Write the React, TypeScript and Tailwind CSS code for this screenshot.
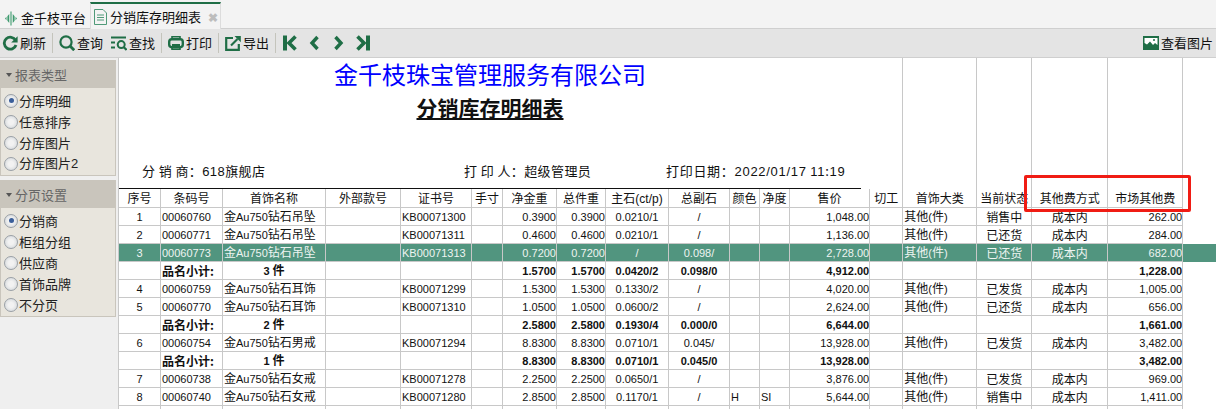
import React from "react";

const GREEN = "#1f6e46";

function Mix({ t, latin = "text-[11px]" }: { t: string; latin?: string }) {
  const parts = t.split(/([A-Za-z0-9.,/()]+)/);
  return (
    <>
      {parts.map((p, i) =>
        /^[A-Za-z0-9.,/()]+$/.test(p) ? (
          <span key={i} className={`${latin} font-['Liberation_Sans',sans-serif]`}>{p}</span>
        ) : (
          <span key={i}>{p}</span>
        )
      )}
    </>
  );
}

const Ic = ({ w = 16, children }: { w?: number; children: React.ReactNode }) => (
  <svg width={w} height={16} viewBox={`0 0 ${w} 16`} fill="none" stroke={GREEN} strokeWidth={2} className="shrink-0">
    {children}
  </svg>
);

function ToolBtn({ icon, label }: { icon: React.ReactNode; label: string }) {
  return (
    <div className="flex items-center gap-[2px] text-[13px] leading-none text-[#111]">
      {icon}
      <span className="-mt-[1px]">{label}</span>
    </div>
  );
}

const Sep = () => <div className="w-px h-[20px] bg-[#c4c4bc] mx-[6px]" />;

function Radio({ label, on }: { label: string; on?: boolean }) {
  return (
    <div className="flex items-center h-[21px] pl-[3px] gap-[1px] text-[13px] text-[#222]">
      <span className="w-[14px] h-[14px] rounded-full border border-[#9aa0a6] bg-[radial-gradient(circle,#f2f2f2_30%,#cdd2d6_100%)] flex items-center justify-center">
        {on && <span className="w-[5px] h-[5px] rounded-full bg-[#3b5f9a]" />}
      </span>
      <span><Mix t={label} latin="text-[13px]" /></span>
    </div>
  );
}

function Group({ title, items, on }: { title: string; items: string[]; on: number }) {
  return (
    <div className="w-[116px] border border-[#c9c5bc] bg-[#e8e5dd]">
      <div className="h-[27px] bg-[#c9c5bc] flex items-center pl-[5px] gap-[2px] text-[13px] text-[#666]">
        <span className="w-0 h-0 border-x-[3.5px] border-x-transparent border-t-[4px] border-t-[#555]" />
        <span className="ml-[1px]">{title}</span>
      </div>
      <div className="pt-[2px] pb-[1px]">
        {items.map((x, i) => (
          <Radio key={x} label={x} on={i === on} />
        ))}
      </div>
    </div>
  );
}

const widths = [42, 62, 103, 75, 71, 31, 54, 49, 63, 61, 30, 30, 80, 33, 74, 55, 76, 75];
const heads = ["序号", "条码号", "首饰名称", "外部款号", "证书号", "手寸", "净金重", "总件重", "主石(ct/p)", "总副石", "颜色", "净度", "售价", "切工", "首饰大类", "当前状态", "其他费方式", "市场其他费"];
const aligns = ["c", "l", "l", "l", "l", "l", "r", "r", "c", "c", "l", "l", "r", "c", "l", "c", "c", "r"];

type R = { d: string[]; sel?: boolean; sum?: boolean };
const row = (n: string, code: string, name: string, cert: string, a: string, b: string, c: string, e: string, g: string, h: string, price: string, st: string, fee: string): R => ({
  d: [n, code, name, "", cert, "", a, b, c, e, g, h, price, "", "其他(件)", st, "成本内", fee],
});
const sum = (cnt: string, a: string, b: string, c: string, e: string, price: string, fee: string): R => ({
  sum: true,
  d: ["", "品名小计:", cnt, "", "", "", a, b, c, e, "", "", price, "", "", "", "", fee],
});
const rows: R[] = [
  row("1", "00060760", "金Au750钻石吊坠", "KB00071300", "0.3900", "0.3900", "0.0210/1", "/", "", "", "1,048.00", "销售中", "262.00"),
  row("2", "00060771", "金Au750钻石吊坠", "KB00071311", "0.4600", "0.4600", "0.0210/1", "/", "", "", "1,136.00", "已还货", "284.00"),
  { ...row("3", "00060773", "金Au750钻石吊坠", "KB00071313", "0.7200", "0.7200", "/", "0.098/", "", "", "2,728.00", "已还货", "682.00"), sel: true },
  sum("3 件", "1.5700", "1.5700", "0.0420/2", "0.098/0", "4,912.00", "1,228.00"),
  row("4", "00060759", "金Au750钻石耳饰", "KB00071299", "1.5300", "1.5300", "0.1330/2", "/", "", "", "4,020.00", "已发货", "1,005.00"),
  row("5", "00060770", "金Au750钻石耳饰", "KB00071310", "1.0500", "1.0500", "0.0600/2", "/", "", "", "2,624.00", "已还货", "656.00"),
  sum("2 件", "2.5800", "2.5800", "0.1930/4", "0.000/0", "6,644.00", "1,661.00"),
  row("6", "00060754", "金Au750钻石男戒", "KB00071294", "8.8300", "8.8300", "0.0710/1", "0.045/", "", "", "13,928.00", "已发货", "3,482.00"),
  sum("1 件", "8.8300", "8.8300", "0.0710/1", "0.045/0", "13,928.00", "3,482.00"),
  row("7", "00060738", "金Au750钻石女戒", "KB00071278", "2.2500", "2.2500", "0.0650/1", "/", "", "", "3,876.00", "已发货", "969.00"),
  row("8", "00060740", "金Au750钻石女戒", "KB00071280", "2.8500", "2.8500", "0.1170/1", "/", "H", "SI", "5,644.00", "销售中", "1,411.00"),
];

const line = "border-r border-b border-[#c8c8c8]";

export default function App() {
  return (
    <div className="w-[1216px] h-[409px] overflow-hidden bg-[#efefef] flex flex-col font-['Noto_Sans_CJK_SC','Liberation_Sans',sans-serif] text-[#111]">
      {/* Tabs */}
      <div className="h-[29px] shrink-0 bg-[#f3f3f3] border-b border-[#cfcfcf] flex items-end">
        <div className="flex items-center h-[26px] w-[90px] pl-[5px] gap-[3px] text-[13px] pt-[6px]">
          <svg width="12" height="15" viewBox="0 0 13 15" className="shrink-0">
            <path d="M6.5 0v15" stroke="#3d9a6e" strokeWidth="1.2" />
            <path d="M4.6 2.5L2.6 5v5l2 2.5zM8.4 2.5l2 2.5v5l-2 2.5z" fill="#3d9a6e" />
            <path d="M1.6 5.5L0 7.5l1.6 2zM11.4 5.5L13 7.5l-1.6 2z" fill="#3d9a6e" />
          </svg>
          <span className="ml-[1px] text-[#111]">金千枝平台</span>
        </div>
        <div className="flex items-center h-[27px] w-[131px] border-t-2 border-t-[#1f6e46] border-x border-x-[#dcdcdc] -mb-px bg-[#f3f3f3] pl-[3px] text-[13px]">
          <svg width="13" height="16" viewBox="0 0 13 16" fill="none" stroke="#4f9a78" strokeWidth="1" className="shrink-0">
            <path d="M.5.5h8.5l3.5 3.5v11.5H.5zM3 6h7M3 8.5h7M3 11h7" />
          </svg>
          <span className="ml-[3px] text-[#111]">分销库存明细表</span>
          <span className="ml-[7px] text-[12px] font-bold text-[#bdbdbd]">✖</span>
        </div>
      </div>
      {/* Toolbar */}
      <div className="h-[29px] shrink-0 bg-[#e4e4e4] border-b border-[#cfcfcf] flex items-center pl-[2px] pr-[3px]">
        <ToolBtn
          label="刷新"
          icon={
            <Ic>
              <path d="M13.6 5.4A6 6 0 1 0 14 10" strokeWidth="2.8" />
              <path d="M15.6 1.2v6.4H9.2z" fill={GREEN} stroke="none" />
            </Ic>
          }
        />
        <Sep />
        <ToolBtn
          label="查询"
          icon={
            <Ic>
              <circle cx="7" cy="7" r="5.6" strokeWidth="2.2" />
              <path d="M11 11l4.2 4.2" strokeWidth="2.8" />
            </Ic>
          }
        />
        <div className="w-[8px]" />
        <ToolBtn
          label="查找"
          icon={
            <Ic>
              <path d="M0 2.5h15M0 7.5h4M0 12.5h4" strokeWidth="1.8" />
              <circle cx="10.2" cy="9.6" r="3.5" strokeWidth="2" />
              <path d="M12.6 12l3 3" strokeWidth="2.2" />
            </Ic>
          }
        />
        <Sep />
        <ToolBtn
          label="打印"
          icon={
            <Ic>
              <rect x="1.2" y="4.2" width="13.6" height="8" rx="2.6" strokeWidth="2.4" />
              <path d="M4 4V1.8h8V4" strokeWidth="1.6" />
              <path d="M4 10h8" strokeWidth="2" />
              <path d="M4 11v3.2h8V11" strokeWidth="1.6" />
            </Ic>
          }
        />
        <Sep />
        <ToolBtn
          label="导出"
          icon={
            <Ic>
              <path d="M8 3H1.2v11.8h12.6V9" strokeWidth="2.2" />
              <path d="M9.5 1H15.8v6.3z" fill={GREEN} stroke="none" />
              <path d="M6 10.5l6.5-6.5" strokeWidth="2.2" />
            </Ic>
          }
        />
        <Sep />
        <div className="flex items-center ml-[1px]">
          <Ic w={14}>
            <path d="M2 .5v15" strokeWidth="4" />
            <path d="M12.5 1.5L6 8l6.5 6.5" strokeWidth="3.6" />
          </Ic>
          <div className="ml-[12px]">
            <Ic w={11}>
              <path d="M8.5 2L3 8l5.5 6" strokeWidth="3.4" />
            </Ic>
          </div>
          <div className="ml-[13px]">
            <Ic w={11}>
              <path d="M2.5 2L8 8l-5.5 6" strokeWidth="3.4" />
            </Ic>
          </div>
          <div className="ml-[12px]">
            <Ic w={14}>
              <path d="M12 .5v15" strokeWidth="4" />
              <path d="M1.5 1.5L8 8l-6.5 6.5" strokeWidth="3.6" />
            </Ic>
          </div>
        </div>
        <div className="ml-auto">
          <ToolBtn
            label="查看图片"
            icon={
              <svg width="16" height="14" viewBox="0 0 16 14" className="shrink-0">
                <rect width="16" height="14" fill={GREEN} />
                <path d="M1.5 2h13v7l-2.5-2-2 2-3-3.5-3 3-2.5-1.5z" fill="#fff" />
                <circle cx="11" cy="4" r="1" fill={GREEN} />
              </svg>
            }
          />
        </div>
      </div>
      {/* Body */}
      <div className="flex-1 flex min-h-0">
        <div className="w-[119px] shrink-0 pt-[2px] flex flex-col gap-[4px] border-r border-[#c8c8c8]">
          <Group title="报表类型" items={["分库明细", "任意排序", "分库图片", "分库图片2"]} on={0} />
          <Group title="分页设置" items={["分销商", "柜组分组", "供应商", "首饰品牌", "不分页"]} on={0} />
        </div>
        <div className="flex-1 min-w-0 bg-white relative">
          <table className="w-[1097px] table-fixed border-separate border-spacing-0 text-[12px] leading-none">
            <colgroup>
              {widths.map((w, i) => (
                <col key={i} style={{ width: w }} />
              ))}
              <col />
            </colgroup>
            <tbody>
              <tr>
                <td colSpan={13} className="p-0 h-[131px] align-top">
                  <div className="h-[131px] flex flex-col">
                    <div className="text-[24px] leading-[32px] text-[#0000ff] text-center w-[742px]">金千枝珠宝管理服务有限公司</div>
                    <div className="text-[21px] leading-[26px] font-bold underline text-[#111] text-center w-[742px] mt-[4px]">分销库存明细表</div>
                    <div className="mt-auto mb-[7px] flex text-[13px] leading-[18px] tracking-[0.4px]">
                      <span className="w-[345px] pl-[23px]">分 销 商：<Mix t="618" latin="text-[13px]" />旗舰店</span>
                      <span className="w-[202px]">打 印 人：超级管理员</span>
                      <span className="tracking-[0.7px]">打印日期：<Mix t="2022/01/17" latin="text-[13px]" /> <Mix t="11:19" latin="text-[13px]" /></span>
                    </div>
                    <div className="h-px w-[742px] bg-[#111]" />
                  </div>
                </td>
                {[0, 1, 2, 3, 4].map((i) => (
                  <td key={i} className="p-0 border-r border-[#c8c8c8]" />
                ))}
                <td className="p-0" />
              </tr>
              <tr>
                {heads.map((h, i) => (
                  <td key={i} className={`h-[19px] p-0 text-center whitespace-nowrap overflow-hidden ${line}`}>
                    <Mix t={h} latin="text-[12px]" />
                  </td>
                ))}
                <td className="p-0" />
              </tr>
              {[...rows, { d: Array(18).fill("") } as R].map((r, ri) => (
                <tr key={ri} className={r.sel ? "bg-[#51957f] text-[#eef4f1]" : ""}>
                  {r.d.map((c, i) => {
                    const a = aligns[i];
                    let al = a === "c" ? "text-center" : a === "r" ? "text-right" : "text-left pl-[1px]";
                    if (r.sum && i === 2) al = "text-center";
                    return (
                      <td key={i} className={`h-[18px] p-0 whitespace-nowrap overflow-hidden ${al} ${r.sum ? "font-bold" : ""} ${line}`}>
                        <Mix t={c} />
                      </td>
                    );
                  })}
                  <td className="p-0" />
                </tr>
              ))}
            </tbody>
          </table>
          <div className="absolute left-[905px] top-[117px] w-[167px] h-[37px] border-[3px] border-[#f01c14] rounded-[2px]" />
        </div>
      </div>
    </div>
  );
}
